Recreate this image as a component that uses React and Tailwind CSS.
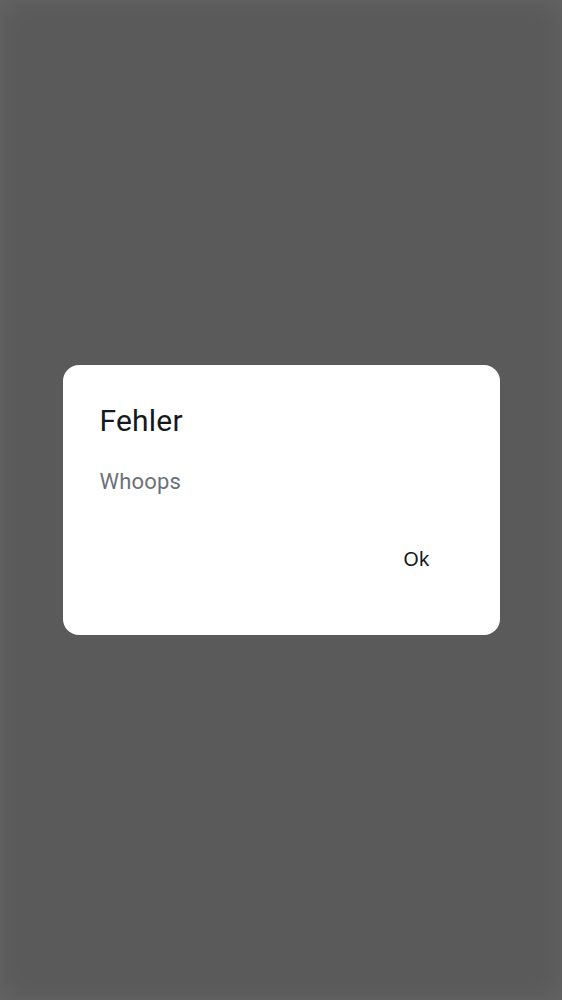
import React from 'react';

const App = () => {
  return (
    <div className="w-full h-[1000px] flex items-center justify-center bg-[#5a5a5a] shadow-[inset_0_0_28px_rgba(255,255,255,0.07)]">
      <div
        className="w-[437px] h-[270px] bg-white rounded-[16px] flex flex-col pt-[38px] pl-[37px] pr-[46px]"
        style={{ fontFamily: 'Roboto, "Noto Sans", sans-serif' }}
      >
        <h2 className="text-[30px] leading-[36px] tracking-[0.2px] text-[#17181b]">Fehler</h2>
        <p className="mt-[28px] text-[22px] leading-[30px] text-[#6b717b] tracking-[0.2px]">Whoops</p>
        <div className="mt-[36px] flex justify-end">
          <button
            className="px-[24px] py-[12px] text-[20px] leading-[28px] text-[#17181b] rounded-full"
            style={{ fontFamily: '"Noto Sans", "Open Sans", sans-serif' }}
          >
            Ok
          </button>
        </div>
      </div>
    </div>
  );
};

export default App;
